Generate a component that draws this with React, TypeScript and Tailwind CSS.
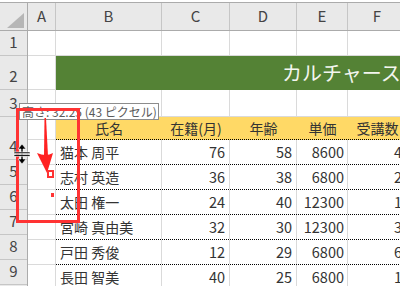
const font = "font-['Noto_Sans_CJK_JP','Noto_Sans',sans-serif]";

const letters = [
  { label: "A", w: "w-[28px]" },
  { label: "B", w: "w-[106px]" },
  { label: "C", w: "w-[68px]" },
  { label: "D", w: "w-[67px]" },
  { label: "E", w: "w-[51px]" },
  { label: "F", w: "w-[59px]" },
];

const rowHeads = [
  { n: 1, h: "h-[25px]" },
  { n: 2, h: "h-[34px]" },
  { n: 3, h: "h-[27px]" },
  { n: 4, h: "h-[43px]" },
  { n: 5, h: "h-[25px]" },
  { n: 6, h: "h-[25px]" },
  { n: 7, h: "h-[25px]" },
  { n: 8, h: "h-[25px]" },
  { n: 9, h: "h-[25px]" },
];

const people = [
  { name: "猫本 周平", months: 76, age: 58, price: 8600, count: 4 },
  { name: "志村 英造", months: 36, age: 38, price: 6800, count: 2 },
  { name: "太田 権一", months: 24, age: 40, price: 12300, count: 1 },
  { name: "宮崎 真由美", months: 32, age: 30, price: 12300, count: 3 },
  { name: "戸田 秀俊", months: 12, age: 29, price: 6800, count: 6 },
  { name: "長田 智美", months: 40, age: 25, price: 6800, count: 1 },
];

function BlankRow({ h }: { h: string }) {
  return (
    <div className={`flex ${h}`}>
      {letters.map((c) => (
        <div key={c.label} className={`${c.w} shrink-0 border-r border-b border-[#dadada]`} />
      ))}
    </div>
  );
}

export default function App() {
  return (
    <div className={`relative w-[400px] h-[286px] overflow-hidden bg-white ${font} text-[#333]`}>
      {/* column letters */}
      <div className="mt-[2px] flex h-[29px] border-t border-b border-[#ababab] bg-[#e9e9e9]">
        <div className="relative w-[28px] shrink-0 border-r border-[#ababab]">
          <svg className="absolute left-[7px] top-[10px]" width="17" height="15" viewBox="0 0 17 15">
            <polygon points="17,0 17,15 0,15" fill="#b6b6b6" />
          </svg>
        </div>
        {letters.map((c) => (
          <div
            key={c.label}
            className={`${c.w} shrink-0 flex items-center justify-center border-r border-[#c6c6c6] text-[15px] text-[#444]`}
          >
            {c.label}
          </div>
        ))}
      </div>

      <div className="flex">
        {/* row numbers */}
        <div className="w-[28px] shrink-0 flex flex-col bg-[#e9e9e9] border-r border-[#ababab]">
          {rowHeads.map((r) => (
            <div
              key={r.n}
              className={`${r.h} shrink-0 flex items-end justify-center pb-[3px] border-b border-[#c6c6c6] text-[15px] leading-[20px] text-[#444]`}
            >
              {r.n}
            </div>
          ))}
        </div>

        {/* cells */}
        <div className="flex flex-col">
          <BlankRow h="h-[25px]" />

          <div className="flex h-[34px]">
            <div className="w-[28px] shrink-0 border-r border-b border-[#dadada]" />
            <div className="w-[351px] shrink-0 flex items-center bg-[#548235] pl-[226px] pb-[1px] whitespace-nowrap text-[20px] text-[#f3f6ef]">
              カルチャースクール受講者一覧
            </div>
          </div>

          <BlankRow h="h-[27px]" />

          <div className="flex h-[23px]">
            <div className="w-[28px] shrink-0 border-r border-b border-[#dadada]" />
            <div className="flex bg-[#ffd966] border-b border-dotted border-black text-[14px]">
              <div className="w-[106px] flex items-center justify-center">氏名</div>
              <div className="w-[68px] flex items-center justify-center">在籍(月)</div>
              <div className="w-[67px] flex items-center justify-center">年齢</div>
              <div className="w-[51px] flex items-center justify-center">単価</div>
              <div className="w-[59px] flex items-center justify-center whitespace-nowrap">受講数</div>
            </div>
          </div>

          {people.map((p) => (
            <div key={p.name} className="flex h-[25px]">
              <div className="w-[28px] shrink-0 border-r border-b border-[#dadada]" />
              <div className="flex border-b border-dotted border-black text-[14.5px]">
                <div className="w-[106px] flex items-center pl-[4px] border-r border-solid border-[#dadada] whitespace-nowrap text-[14px]">
                  {p.name}
                </div>
                <div className="w-[68px] flex items-center justify-end pr-[4px] border-r border-solid border-[#dadada]">
                  {p.months}
                </div>
                <div className="w-[67px] flex items-center justify-end pr-[4px] border-r border-solid border-[#dadada]">
                  {p.age}
                </div>
                <div className="w-[51px] flex items-center justify-end pr-[3px] border-r border-solid border-[#dadada]">
                  {p.price}
                </div>
                <div className="w-[59px] flex items-center justify-end pr-[4px] border-r border-solid border-[#dadada]">
                  {p.count}
                </div>
              </div>
            </div>
          ))}
        </div>
      </div>

      {/* drag tooltip */}
      <div className="absolute left-[19px] top-[103px] h-[17px] w-[140px] flex items-center pl-[2px] bg-white border border-[#8c8c8c] text-[12px] leading-none text-[#5a5a5a] whitespace-nowrap">
        高さ: 32.25 (43 ピクセル)
      </div>

      {/* red annotation */}
      <div className="absolute left-[16px] top-[108px] w-[64px] h-[115px] border-[3px] border-[#ff3333]" />
      <svg className="absolute left-[34px] top-[118px]" width="22" height="58" viewBox="0 0 22 58">
        <polygon points="10.5,0 12,0 14,38 10,38" fill="#ff2222" />
        <path d="M3 35 Q12 39 19 35 L13 55 Z" fill="#ff2222" />
      </svg>
      <div className="absolute left-[47px] top-[170px] w-[7px] h-[8px] border-2 border-[#ff3333] bg-white" />
      <div className="absolute left-[51px] top-[193px] w-[3px] h-[4px] bg-[#ff3333]" />

      {/* row resize cursor */}
      <svg className="absolute left-[13px] top-[143px]" width="18" height="22" viewBox="0 0 18 22">
        <g fill="black" stroke="white" strokeWidth="0.6">
          <polygon points="9,1 13,6 10,6 10,16 13,16 9,21 5,16 8,16 8,6 5,6" />
          <rect x="1" y="9" width="16" height="1.6" />
          <rect x="1" y="11.6" width="16" height="1.6" />
        </g>
      </svg>
    </div>
  );
}
